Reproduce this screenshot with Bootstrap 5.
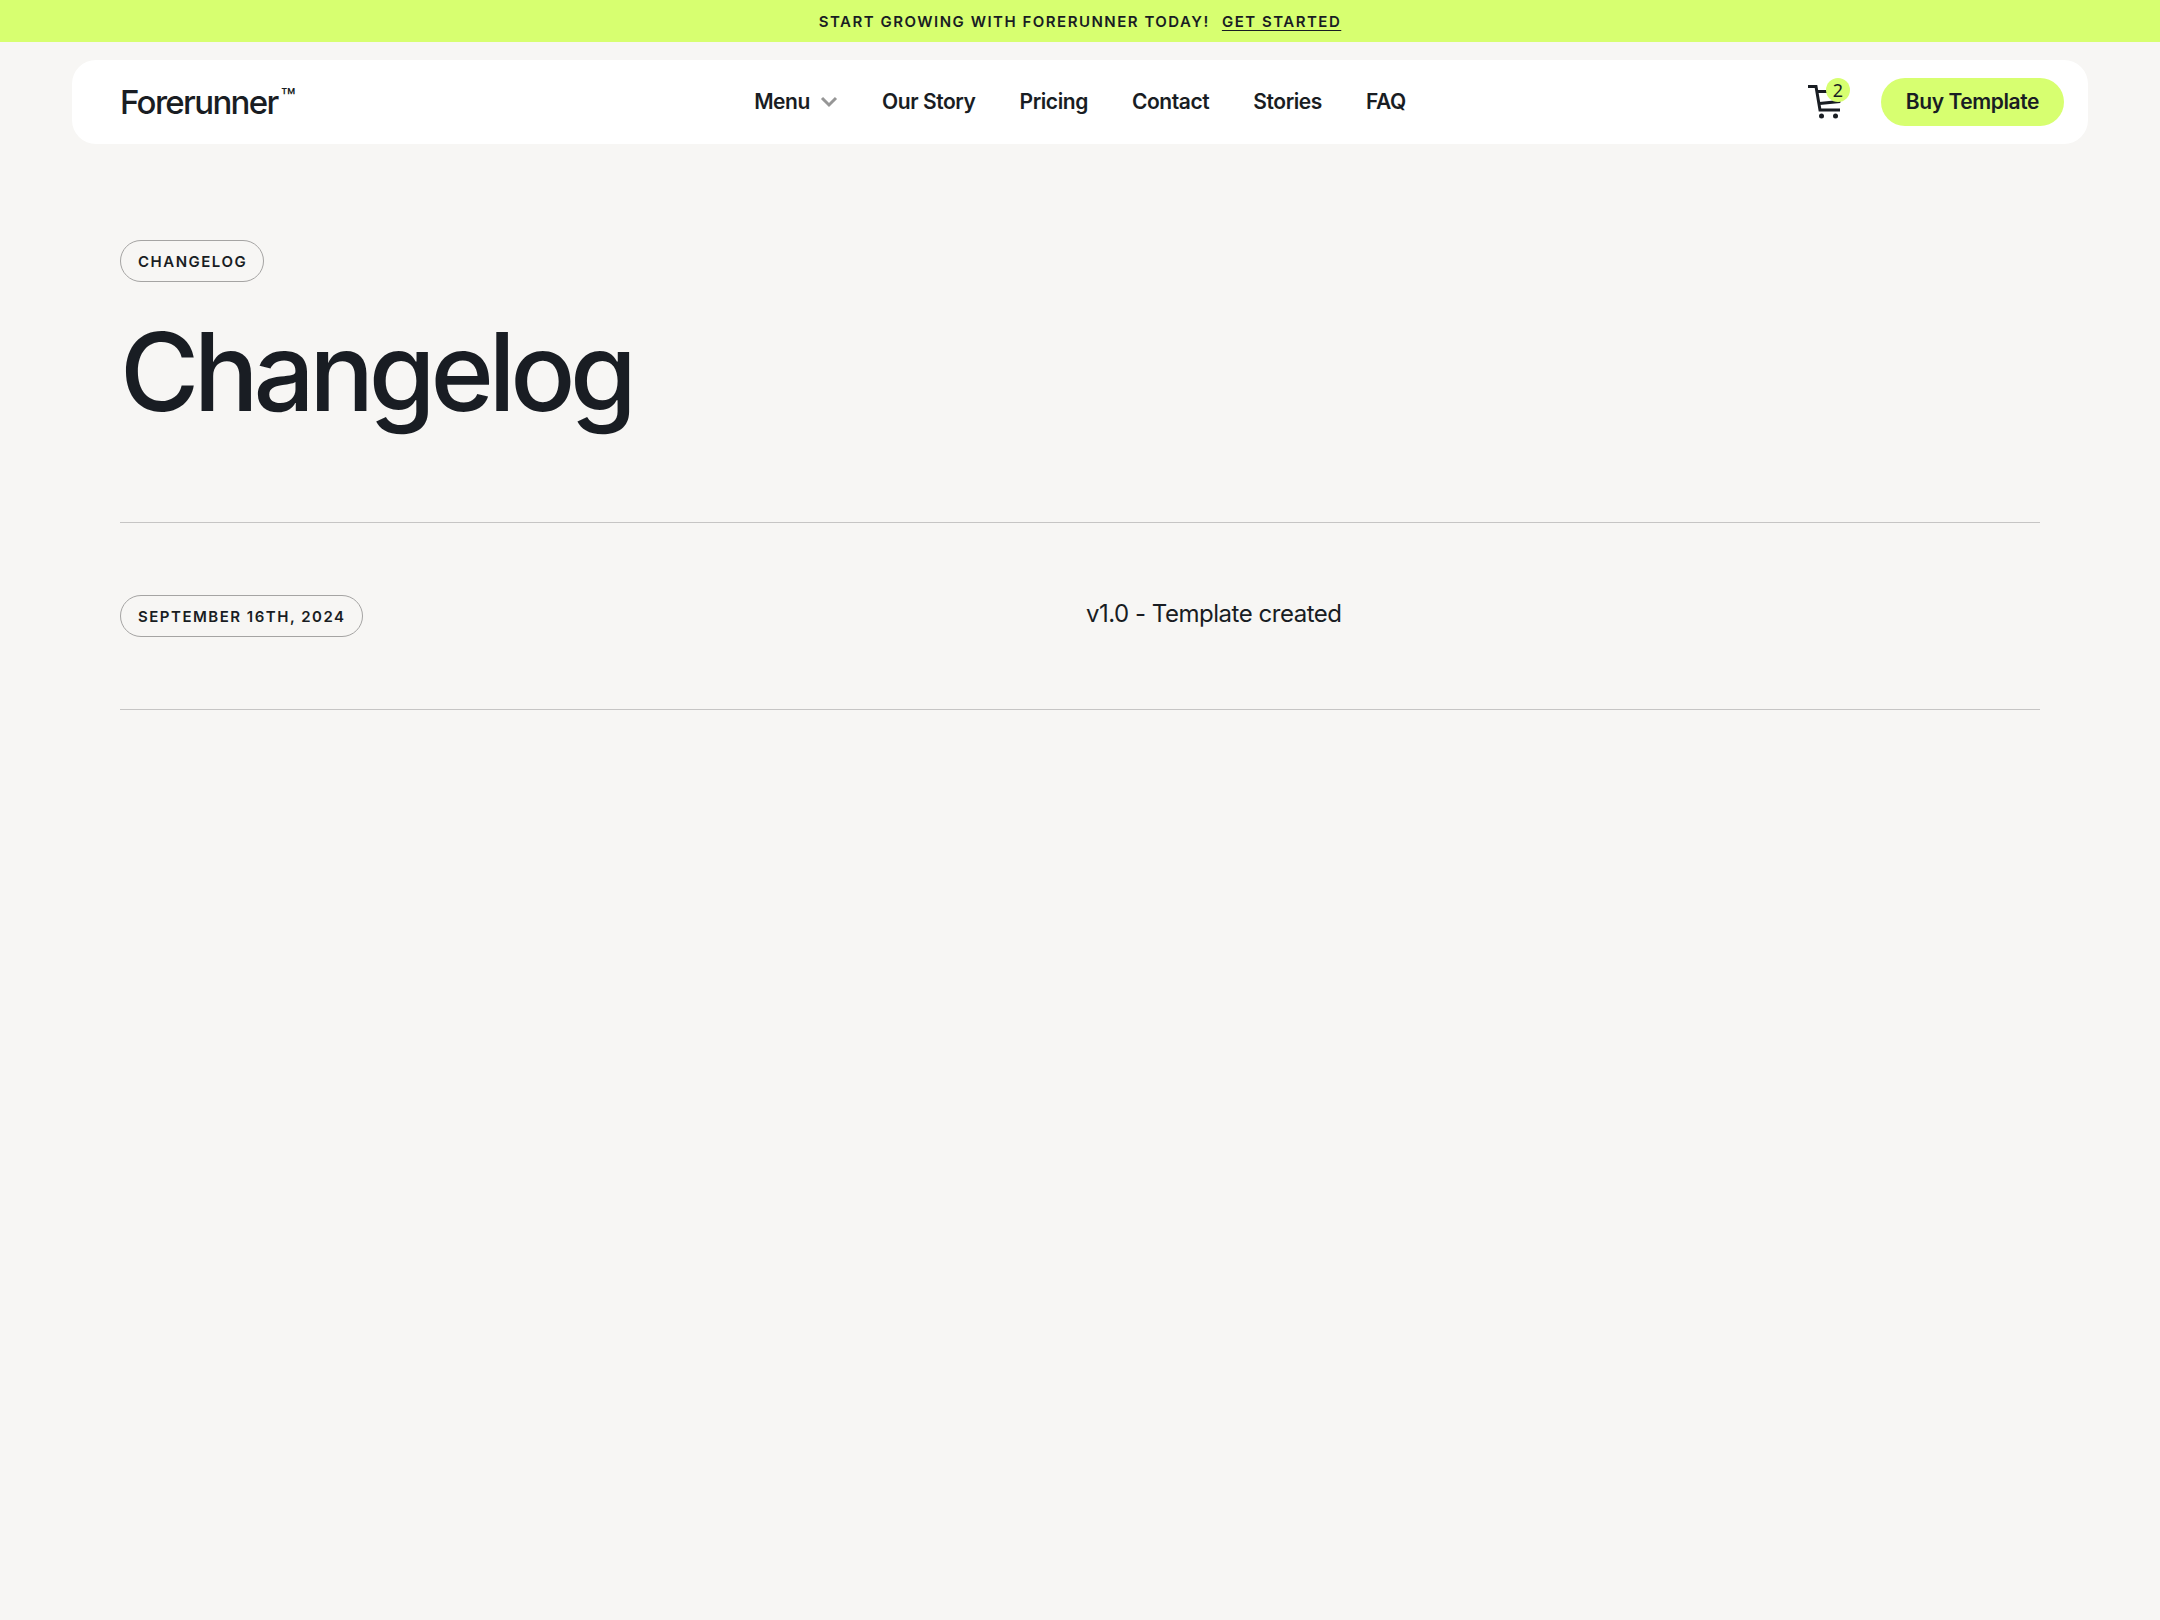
<!DOCTYPE html>
<html lang="en">
<head>
<meta charset="utf-8">
<meta name="viewport" content="width=device-width, initial-scale=1">
<title>Changelog – Forerunner</title>
<link href="https://cdn.jsdelivr.net/npm/bootstrap@5.3.0/dist/css/bootstrap.min.css" rel="stylesheet">
<style>
:root { --ink: #191d23; --lime: #d7ff70; --paper: #f7f6f4; }
body { background: var(--paper); color: var(--ink); font-family: Inter, "Liberation Sans", sans-serif; }
a { color: inherit; }
a:hover { color: inherit; }
.label-text { font-size: 15px; line-height: 20px; font-weight: 600; letter-spacing: .1em; text-transform: uppercase; }
.promo { background: var(--lime); padding: 12px 24px 10px; gap: 12px; }
.promo a { text-underline-offset: 3px; text-decoration-thickness: 1px; text-decoration-color: var(--ink); }
.site-header { padding: 18px 72px 0; }
.site-nav { background: #fff; border-radius: 24px; padding: 18px 24px; }
.side { flex: 1 1 0; }
.brand { font-size: 33px; line-height: 48px; font-weight: 500; letter-spacing: -.05em; text-decoration: none; margin-left: 24px; }
.brand sup { font-size: 24px; line-height: 16px; top: -8px; letter-spacing: 0; margin-left: 3px; }
.links { gap: 44px; font-size: 21px; line-height: 48px; font-weight: 600; letter-spacing: -.02em; }
.links a, .links button { text-decoration: none; color: inherit; font-weight: 600; letter-spacing: inherit; }
.links button { gap: 10px; }
.cart { width: 44px; height: 48px; margin-right: 30px; }
.cart-count { top: 0; right: 1px; width: 24px; height: 24px; background: var(--lime); font: 18px/24px "Noto Sans", sans-serif; }
.buy { background: var(--lime); height: 48px; padding: 0 25px; font-size: 21px; line-height: 48px; font-weight: 600; letter-spacing: -.02em; text-decoration: none; }
.page { padding: 96px 120px; }
.pill { border: 1px solid #a5a4a3; padding: 11px 16px 9px 17px; }
.title { font-size: 108px; line-height: 120px; font-weight: 500; letter-spacing: -.05em; margin: 30px 0 90px; }
.entry { border-top: 1px solid #c6c5c4; border-bottom: 1px solid #c6c5c4; padding: 72px 0; gap: 12px; }
.entry > div { flex: 1 1 0; }
.entry p { font-size: 24px; line-height: 38px; letter-spacing: -.02em; }
</style>
</head>
<body>
<div class="promo label-text d-flex justify-content-center"><span>Start growing with Forerunner today!</span><a href="#">Get started</a></div>
<header class="site-header">
  <nav class="site-nav d-flex align-items-center" aria-label="Main">
    <div class="side"><a class="brand d-inline-block" href="#">Forerunner<sup>™</sup></a></div>
    <div class="links d-flex align-items-center">
      <button type="button" class="d-flex align-items-center border-0 bg-transparent p-0">Menu
        <svg width="18" height="18" viewBox="0 0 18 18" fill="none" stroke="#969696" stroke-width="3" aria-hidden="true"><path d="M2 5l7 7 7-7"/></svg>
      </button>
      <a href="#">Our Story</a>
      <a href="#">Pricing</a>
      <a href="#">Contact</a>
      <a href="#">Stories</a>
      <a href="#">FAQ</a>
    </div>
    <div class="side d-flex justify-content-end align-items-center">
      <a class="cart position-relative d-block" href="#" aria-label="Cart, 2 items">
        <svg width="44" height="48" viewBox="0 0 44 48" fill="none" stroke="#191d23" stroke-width="3" aria-hidden="true"><path d="M1 8.500h8l4 23.500h20M10 13.500h24l-2 10-19.500 2"/><g fill="#191d23" stroke="none"><circle cx="14.500" cy="38" r="2.500"/><circle cx="28.500" cy="38" r="2.500"/></g></svg>
        <span class="cart-count position-absolute rounded-circle text-center">2</span>
      </a>
      <a class="buy rounded-pill" href="#">Buy Template</a>
    </div>
  </nav>
</header>
<main class="page">
  <div class="d-flex"><span class="pill label-text rounded-pill">Changelog</span></div>
  <h1 class="title">Changelog</h1>
  <section class="entry d-flex align-items-start">
    <div class="d-flex"><time class="pill label-text rounded-pill" datetime="2024-09-16">September 16th, 2024</time></div>
    <div><p class="mb-0">v1.0 - Template created</p></div>
  </section>
</main>
<script src="https://cdn.jsdelivr.net/npm/bootstrap@5.3.0/dist/js/bootstrap.bundle.min.js"></script>
</body>
</html>
